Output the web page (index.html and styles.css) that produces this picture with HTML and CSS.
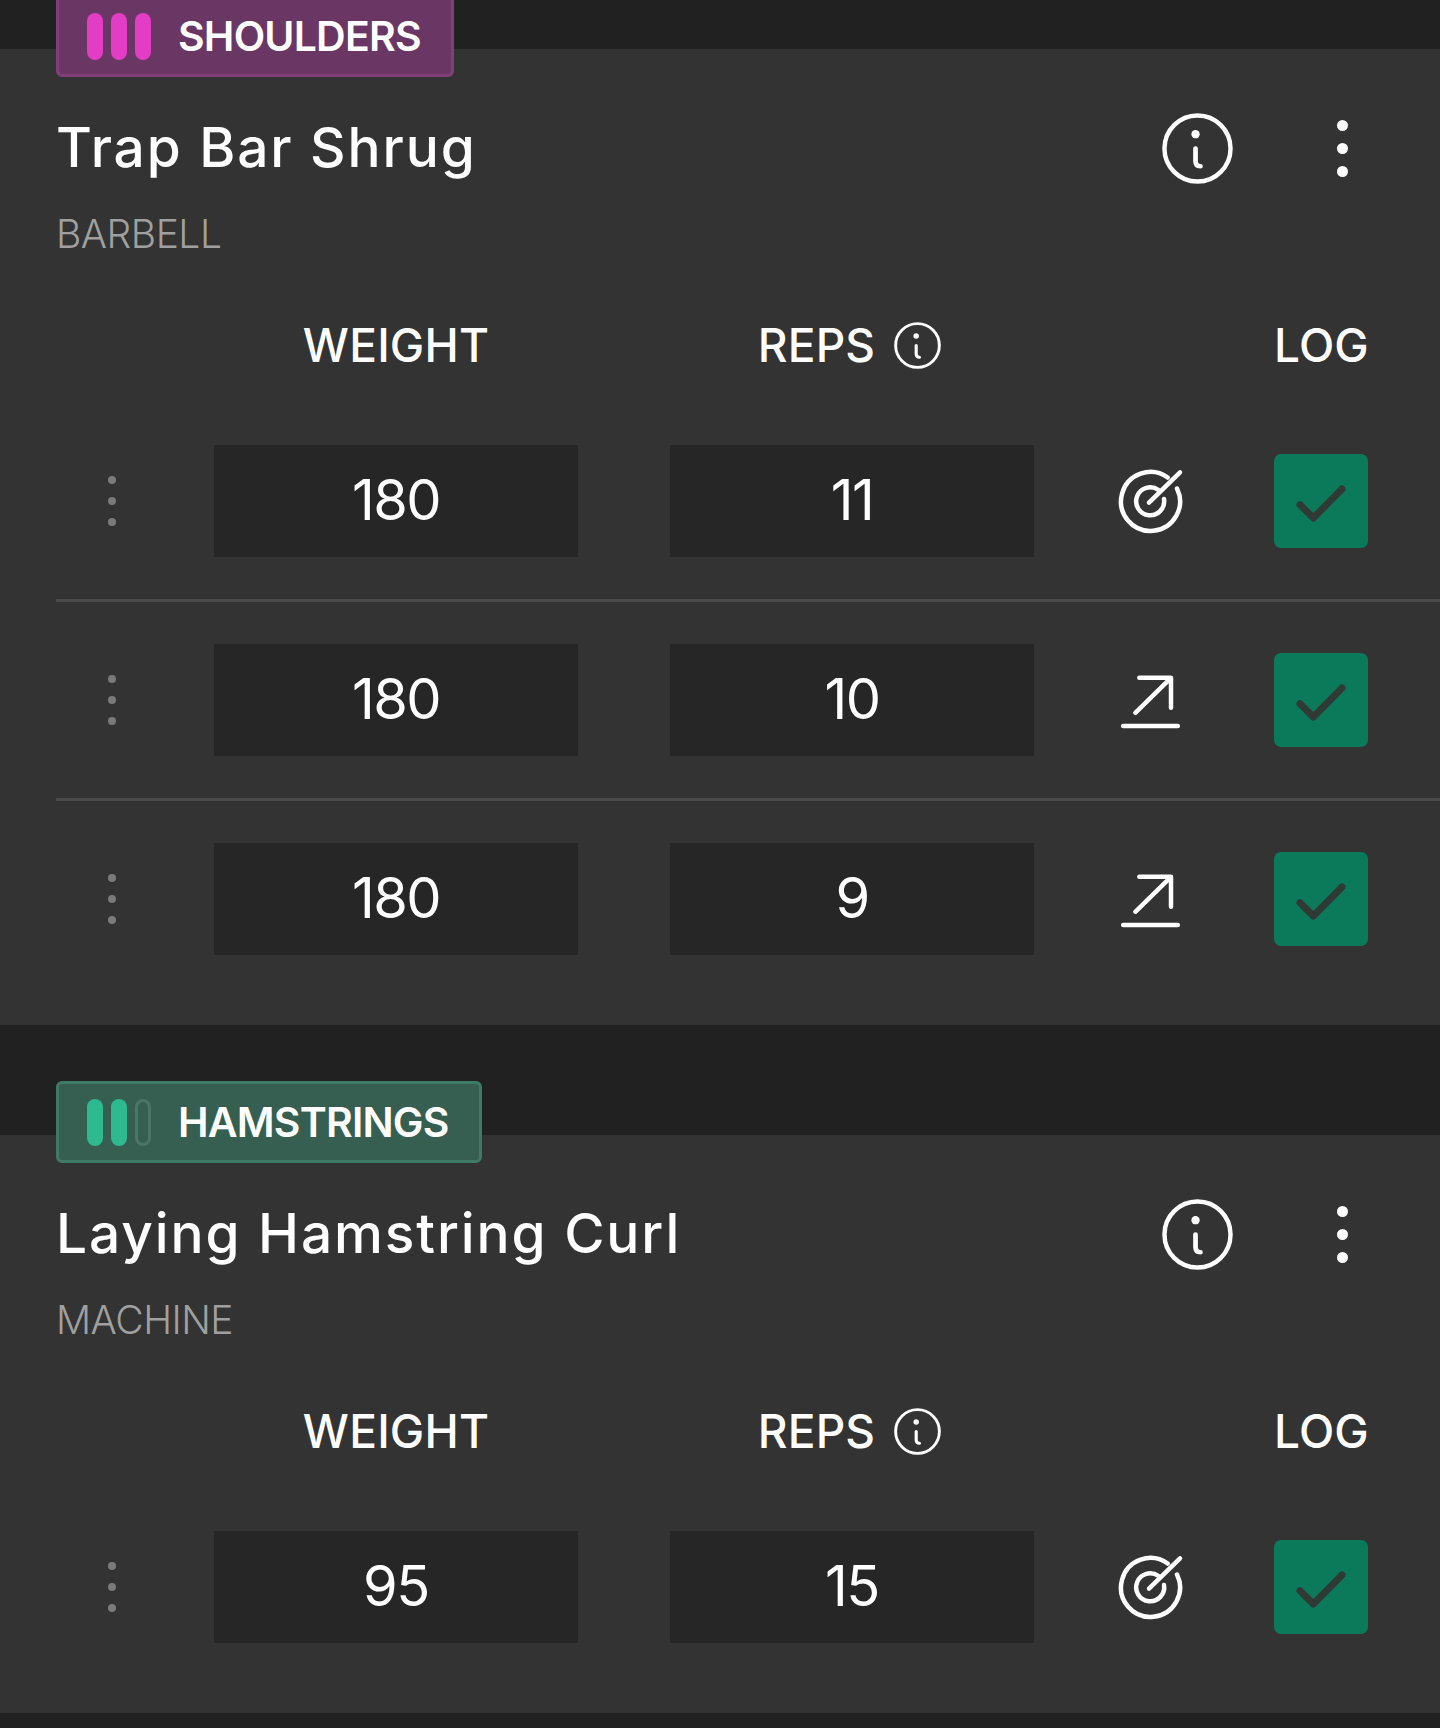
FILE: index.html
```html
<!DOCTYPE html>
<html lang="en">
<head>
    <meta charset="UTF-8">
    <meta name="viewport" content="width=device-width, initial-scale=1.0">
    <title>Workout</title>
    <link rel="stylesheet" href="styles.css">
</head>
<body>
    <!-- shared icons -->
    <svg class="icon-defs" aria-hidden="true">
        <symbol id="icon-info" viewBox="0 0 72 72">
            <circle cx="36" cy="36" r="33.5" fill="none" stroke="currentColor" stroke-width="4.5"/>
            <circle cx="34" cy="21.5" r="4.2" fill="currentColor"/>
            <path d="M34 36V49Q34 54 39 54" fill="none" stroke="currentColor" stroke-width="4.8" stroke-linecap="round"/>
        </symbol>
        <symbol id="icon-target" viewBox="0 0 72 72">
            <g fill="none" stroke="currentColor" stroke-width="4.5" stroke-linecap="round">
                <path d="M63 23.5A29.5 29.5 0 1 1 53.7 12.5"/>
                <path d="M50 34A14 14 0 1 1 44.5 25"/>
                <path d="M35 37.7L66 7.4"/>
            </g>
        </symbol>
        <symbol id="icon-arrow" viewBox="0 0 72 72">
            <g fill="none" stroke="currentColor" stroke-width="4.5" stroke-linecap="round" stroke-linejoin="round">
                <path d="M25.3 13.8H57V43.8"/>
                <path d="M21.3 48.8L56 14.8"/>
                <path d="M9.2 62H63.8"/>
            </g>
        </symbol>
        <symbol id="icon-check" viewBox="0 0 94 94">
            <path d="M26 50.7L39.3 64L68 35" fill="none" stroke="currentColor" stroke-width="7" stroke-linecap="round" stroke-linejoin="round"/>
        </symbol>
    </svg>

    <!-- Trap Bar Shrug -->
    <section class="exercise first">
        <div class="badge badge-pink">
            <span class="bars"><i></i><i></i><i></i></span>
            <span class="badge-name">SHOULDERS</span>
        </div>
        <div class="title-row">
            <h2>Trap Bar Shrug</h2>
            <div class="title-actions">
                <svg class="info-big"><use href="#icon-info"/></svg>
                <span class="kebab"><i></i><i></i><i></i></span>
            </div>
        </div>
        <p class="equipment">BARBELL</p>
        <div class="set-grid set-head">
            <span class="col-weight">WEIGHT</span>
            <span class="col-reps">REPS <svg class="info-small"><use href="#icon-info"/></svg></span>
            <span class="col-log">LOG</span>
        </div>
        <div class="set-grid set-row">
            <span class="drag"><i></i><i></i><i></i></span>
            <div class="field">180</div>
            <div class="field field-reps">11</div>
            <svg class="status"><use href="#icon-target"/></svg>
            <div class="logged"><svg><use href="#icon-check"/></svg></div>
        </div>
        <div class="set-grid set-row">
            <span class="drag"><i></i><i></i><i></i></span>
            <div class="field">180</div>
            <div class="field field-reps">10</div>
            <svg class="status"><use href="#icon-arrow"/></svg>
            <div class="logged"><svg><use href="#icon-check"/></svg></div>
        </div>
        <div class="set-grid set-row">
            <span class="drag"><i></i><i></i><i></i></span>
            <div class="field">180</div>
            <div class="field field-reps">9</div>
            <svg class="status"><use href="#icon-arrow"/></svg>
            <div class="logged"><svg><use href="#icon-check"/></svg></div>
        </div>
    </section>

    <!-- Laying Hamstring Curl -->
    <section class="exercise">
        <div class="badge badge-green">
            <span class="bars"><i></i><i></i><i class="empty"></i></span>
            <span class="badge-name">HAMSTRINGS</span>
        </div>
        <div class="title-row">
            <h2>Laying Hamstring Curl</h2>
            <div class="title-actions">
                <svg class="info-big"><use href="#icon-info"/></svg>
                <span class="kebab"><i></i><i></i><i></i></span>
            </div>
        </div>
        <p class="equipment">MACHINE</p>
        <div class="set-grid set-head">
            <span class="col-weight">WEIGHT</span>
            <span class="col-reps">REPS <svg class="info-small"><use href="#icon-info"/></svg></span>
            <span class="col-log">LOG</span>
        </div>
        <div class="set-grid set-row">
            <span class="drag"><i></i><i></i><i></i></span>
            <div class="field">95</div>
            <div class="field field-reps">15</div>
            <svg class="status"><use href="#icon-target"/></svg>
            <div class="logged"><svg><use href="#icon-check"/></svg></div>
        </div>
    </section>
</body>
</html>
```

FILE: styles.css
```css
body {
    margin: 0;
    height: 1728px;
    overflow: hidden;
    background-color: #212121;
    color: #fff;
    font-family: Inter, "Noto Sans", sans-serif;
}
.icon-defs {
    display: none;
}
.exercise {
    margin-top: 110px;
    padding: 0 0 28px 56px;
    background-color: #333;
}
.exercise.first {
    margin-top: 49px;
}
/* Badge sits half over the top edge of the card */
.badge {
    display: inline-flex;
    align-items: center;
    box-sizing: border-box;
    height: 82px;
    margin-top: -54px;
    padding: 0 30px 0 28px;
    border: 3px solid;
    border-radius: 6px;
    vertical-align: top;
}
.badge-pink {
    background-color: #6a3765;
    border-color: #813f79;
    --bar: #e23dc4;
}
.badge-green {
    background-color: #365f52;
    border-color: #3f7a66;
    --bar: #2fb98f;
}
.bars {
    display: flex;
    gap: 8px;
    margin-right: 27px;
}
.bars i {
    box-sizing: border-box;
    width: 16px;
    height: 47px;
    border-radius: 8px;
    background-color: var(--bar);
}
.bars i.empty {
    background: none;
    border: 3px solid #4b7567;
}
.badge-name {
    font-size: 41px;
    font-weight: 600;
    letter-spacing: -0.8px;
}
.title-row {
    display: flex;
    justify-content: space-between;
    align-items: center;
    height: 71px;
    margin-top: 36px;
    padding-right: 92px;
}
h2 {
    margin: 0 0 4px;
    font-size: 55px;
    font-weight: 500;
    letter-spacing: 1.9px;
}
.title-actions {
    display: flex;
    align-items: center;
    gap: 104px;
}
.info-big {
    display: block;
    width: 71px;
    height: 71px;
}
.kebab {
    display: flex;
    flex-direction: column;
    gap: 12px;
}
.kebab i {
    width: 11px;
    height: 11px;
    border-radius: 50%;
    background-color: #fff;
}
.equipment {
    margin: 30px 0 0;
    color: #a0a0a0;
    font-size: 39px;
    font-weight: 300;
    line-height: 40px;
    letter-spacing: -0.5px;
}
.set-grid {
    display: grid;
    grid-template-columns: 158px 364px 456px 240px 94px;
    align-items: center;
    padding-right: 72px;
}
.set-head {
    height: 116px;
    margin-top: 33px;
    font-size: 46px;
    font-weight: 500;
    letter-spacing: 0.2px;
}
.col-weight {
    grid-column: 2;
    text-align: center;
}
.col-reps {
    grid-column: 3;
    display: flex;
    justify-content: center;
    align-items: center;
    gap: 19px;
    padding-left: 87px;
}
.col-log {
    grid-column: 5;
    text-align: center;
    white-space: nowrap;
}
.info-small {
    width: 47px;
    height: 47px;
}
.set-row {
    padding-top: 42px;
    padding-bottom: 42px;
    border-bottom: 3px solid #4a4a4a;
}
.set-row:last-child {
    border-bottom: none;
}
.drag {
    display: flex;
    flex-direction: column;
    gap: 13px;
    padding-left: 52px;
}
.drag i {
    width: 8px;
    height: 8px;
    border-radius: 50%;
    background-color: #7a7a7a;
}
.field {
    height: 112px;
    background-color: #262626;
    font-size: 56px;
    line-height: 111px;
    text-align: center;
    letter-spacing: -1.5px;
}
.field-reps {
    width: 364px;
    justify-self: end;
}
.status {
    width: 72px;
    height: 72px;
    margin-left: 80px;
}
.logged {
    width: 94px;
    height: 94px;
    border-radius: 7px;
    background-color: #0b7a5a;
    color: #2f3a36;
}
.logged svg {
    display: block;
    width: 94px;
    height: 94px;
}
```
